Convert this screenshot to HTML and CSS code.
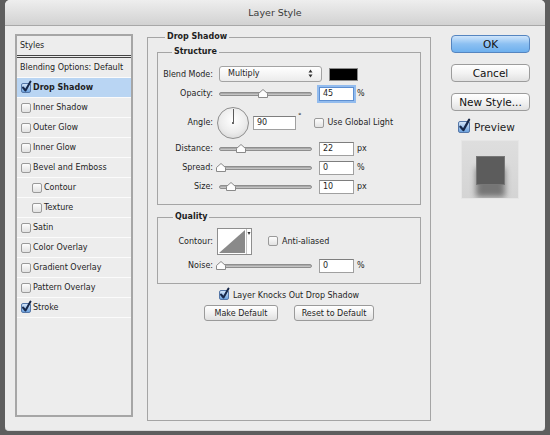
FILE: index.html
```html
<!DOCTYPE html>
<html lang="en">
<head>
    <meta charset="UTF-8">
    <title>Layer Style</title>
    <link rel="stylesheet" href="styles.css">
</head>
<body>
<div class="window">
    <div class="titlebar">Layer Style</div>

    <div class="content">
        <!-- styles list -->
        <div class="styles-panel">
            <div class="styles-head">Styles</div>
            <div class="style-row plain">Blending Options: Default</div>
            <div class="style-row selected"><span class="cb checked"><svg viewBox="0 0 11 13"><path d="M2 7.5 L4.5 10.5 L9.5 1.5"/></svg></span><b>Drop Shadow</b></div>
            <div class="style-row"><span class="cb"></span>Inner Shadow</div>
            <div class="style-row"><span class="cb"></span>Outer Glow</div>
            <div class="style-row"><span class="cb"></span>Inner Glow</div>
            <div class="style-row"><span class="cb"></span>Bevel and Emboss</div>
            <div class="style-row indent"><span class="cb"></span>Contour</div>
            <div class="style-row indent"><span class="cb"></span>Texture</div>
            <div class="style-row"><span class="cb"></span>Satin</div>
            <div class="style-row"><span class="cb"></span>Color Overlay</div>
            <div class="style-row"><span class="cb"></span>Gradient Overlay</div>
            <div class="style-row"><span class="cb"></span>Pattern Overlay</div>
            <div class="style-row"><span class="cb checked"><svg viewBox="0 0 11 13"><path d="M2 7.5 L4.5 10.5 L9.5 1.5"/></svg></span>Stroke</div>
        </div>

        <!-- drop shadow settings -->
        <fieldset class="group outer">
            <legend>Drop Shadow</legend>
            <div class="outer-body">
                <fieldset class="group">
                    <legend>Structure</legend>
                    <div class="rows structure">
                        <div class="row row-blend">
                            <span class="lbl">Blend Mode:</span>
                            <div class="select">Multiply
                                <svg class="arrows" viewBox="0 0 5 9"><path d="M0.5 3.5 L2.5 0.5 L4.5 3.5 Z M0.5 5.5 L2.5 8.5 L4.5 5.5 Z"/></svg>
                            </div>
                            <span class="swatch"></span>
                        </div>
                        <div class="row">
                            <span class="lbl">Opacity:</span>
                            <div class="slider"><svg class="thumb" style="left: 38px" viewBox="0 0 10 9"><path d="M0.5 8.5 V4.5 L5 0.5 L9.5 4.5 V8.5 Z"/></svg></div>
                            <span class="field focus">45</span><span class="unit">%</span>
                        </div>
                        <div class="row row-angle">
                            <span class="lbl">Angle:</span>
                            <div class="dial"></div>
                            <span class="field wide">90</span><span class="deg">°</span>
                            <span class="cb gap-cb"></span><span class="cb-text">Use Global Light</span>
                        </div>
                        <div class="row">
                            <span class="lbl">Distance:</span>
                            <div class="slider"><svg class="thumb" style="left: 16px" viewBox="0 0 10 9"><path d="M0.5 8.5 V4.5 L5 0.5 L9.5 4.5 V8.5 Z"/></svg></div>
                            <span class="field">22</span><span class="unit">px</span>
                        </div>
                        <div class="row">
                            <span class="lbl">Spread:</span>
                            <div class="slider"><svg class="thumb" style="left: -4px" viewBox="0 0 10 9"><path d="M0.5 8.5 V4.5 L5 0.5 L9.5 4.5 V8.5 Z"/></svg></div>
                            <span class="field">0</span><span class="unit">%</span>
                        </div>
                        <div class="row">
                            <span class="lbl">Size:</span>
                            <div class="slider"><svg class="thumb" style="left: 6px" viewBox="0 0 10 9"><path d="M0.5 8.5 V4.5 L5 0.5 L9.5 4.5 V8.5 Z"/></svg></div>
                            <span class="field">10</span><span class="unit">px</span>
                        </div>
                    </div>
                </fieldset>

                <fieldset class="group quality">
                    <legend>Quality</legend>
                    <div class="rows">
                        <div class="row row-contour">
                            <span class="lbl">Contour:</span>
                            <svg class="contour" viewBox="0 0 35 27">
                                <rect x="0.5" y="0.5" width="34" height="26" fill="#fff" stroke="#8e8e8e"/>
                                <path d="M2 25 L28 2 V25 Z" fill="#8a8a8a"/>
                                <path d="M29.5 1 V26" stroke="#c4c4c4"/>
                                <path d="M30.5 4 H33.5 L32 7 Z" fill="#333"/>
                            </svg>
                            <span class="cb gap-cb2"></span><span class="cb-text">Anti-aliased</span>
                        </div>
                        <div class="row">
                            <span class="lbl">Noise:</span>
                            <div class="slider"><svg class="thumb" style="left: -4px" viewBox="0 0 10 9"><path d="M0.5 8.5 V4.5 L5 0.5 L9.5 4.5 V8.5 Z"/></svg></div>
                            <span class="field">0</span><span class="unit">%</span>
                        </div>
                    </div>
                </fieldset>

                <div class="knockout">
                    <span class="cb checked"><svg viewBox="0 0 11 13"><path d="M2 7.5 L4.5 10.5 L9.5 1.5"/></svg></span>
                    <span class="cb-text">Layer Knocks Out Drop Shadow</span>
                </div>
                <div class="defaults">
                    <button class="btn make">Make Default</button>
                    <button class="btn reset">Reset to Default</button>
                </div>
            </div>
        </fieldset>

        <!-- dialog buttons -->
        <div class="actions">
            <button class="big-btn primary">OK</button>
            <button class="big-btn">Cancel</button>
            <button class="big-btn">New Style...</button>
            <div class="preview-row">
                <span class="cb big checked"><svg viewBox="0 0 11 13"><path d="M2 7.5 L4.5 10.5 L9.5 1.5"/></svg></span>
                <span>Preview</span>
            </div>
            <div class="preview-box"><div class="preview-square"></div></div>
        </div>
    </div>
</div>
</body>
</html>
```

FILE: styles.css
```css
body {
    margin: 0;
    height: 435px;
    background: #5e5e5e;
    font-family: "DejaVu Sans", sans-serif;
    font-size: 8px;
    color: #1e1e1e;
    overflow: hidden;
}
.window {
    width: 540px;
    height: 431px;
    margin-left: 5px;
    background: #ececec;
    border-radius: 5px 5px 4px 4px;
    overflow: hidden;
    box-sizing: border-box;
    border-bottom: 1px solid #d8d8d8;
}
.titlebar {
    height: 25px;
    line-height: 25px;
    border-bottom: 1px solid #a8a8a8;
    background: linear-gradient(#eeeeee, #d2d2d2);
    text-align: center;
    font-size: 9.5px;
    color: #3a3a3a;
}
.content {
    display: flex;
    align-items: flex-start;
    padding: 8px 10px 0 10px;
}

/* left list */
.styles-panel {
    width: 118px;
    height: 383px;
    box-sizing: border-box;
    border: 2px solid #a6a6a6;
    background: #ededed;
}
.styles-head {
    height: 19px;
    line-height: 19px;
    padding-left: 3px;
    border-bottom: 3px double #444;
}
.style-row {
    height: 20px;
    box-sizing: border-box;
    border-bottom: 1px solid #fbfbfb;
    display: flex;
    align-items: center;
    gap: 2px;
    padding-left: 4px;
}
.style-row.plain { padding-left: 3px; }
.style-row.indent { padding-left: 15px; }
.style-row.selected { background: #b9d5f3; }

/* checkboxes */
.cb {
    position: relative;
    flex: none;
    width: 10px;
    height: 10px;
    box-sizing: border-box;
    border: 1px solid #9a9a9a;
    border-radius: 2px;
    background: linear-gradient(#fdfdfd, #e2e2e2);
}
.cb.checked {
    border-color: #5577a8;
    background: linear-gradient(#d3e5f9, #6da2de);
}
.cb svg {
    position: absolute;
    left: -1px;
    top: -4px;
    width: 11px;
    height: 13px;
    overflow: visible;
}
.cb svg path {
    fill: none;
    stroke: #17284a;
    stroke-width: 2;
    stroke-linecap: round;
    stroke-linejoin: round;
}
.cb.big {
    width: 12px;
    height: 12px;
}
.cb.big svg {
    width: 13px;
    height: 15px;
}
.cb-text { margin-left: 4px; }

/* group boxes */
.group {
    margin: 0;
    padding: 0;
    border: 1px solid #a5a5a5;
    min-width: 0;
}
.group legend {
    font-weight: bold;
    line-height: 10px;
    padding: 0 2px;
    margin-left: 14px;
}
.outer {
    flex: none;
    width: 284px;
    height: 389px;
    box-sizing: border-box;
    margin: -2px 0 0 14px;
}
.outer > legend { margin-left: 17px; }
.outer-body { padding: 5px 9px 0 9px; }
.rows { padding: 7px 0 8px 0; }
.quality { margin-top: 7px; }
.quality legend { margin-left: 15px; }
.quality .rows { padding-top: 4px; }

.row {
    display: flex;
    align-items: center;
    height: 19px;
}
.row-blend { height: 20px; }
.row-angle {
    height: 36px;
    box-sizing: border-box;
    padding-top: 3px;
}
.row-contour { height: 30px; }
.lbl {
    width: 55px;
    margin-right: 6px;
    text-align: right;
    flex: none;
}

.select {
    position: relative;
    width: 103px;
    height: 16px;
    box-sizing: border-box;
    border: 1px solid #a3a3a3;
    border-radius: 3px;
    background: linear-gradient(#ffffff, #ebebeb);
    padding-left: 8px;
    line-height: 14px;
}
.arrows {
    position: absolute;
    right: 8px;
    top: 2px;
    width: 5px;
    height: 9px;
    fill: #333;
}
.swatch {
    width: 29px;
    height: 13px;
    margin-left: 7px;
    box-sizing: border-box;
    border: 1px solid #8a8a8a;
    background: #000;
}

.slider {
    position: relative;
    width: 93px;
    height: 4px;
    box-sizing: border-box;
    border: 1px solid #8e8e8e;
    border-radius: 2px;
    background: linear-gradient(#9d9d9d, #d0d0d0);
}
.thumb {
    position: absolute;
    top: -4px;
    width: 10px;
    height: 9px;
    fill: #fdfdfd;
    stroke: #8a8a8a;
}

.field {
    width: 35px;
    height: 14px;
    box-sizing: border-box;
    margin-left: 7px;
    border: 1px solid #a0a0a0;
    border-top-color: #7e7e7e;
    background: #fff;
    padding-left: 3px;
    line-height: 12px;
}
.field.focus {
    border-color: #5d8fd2;
    box-shadow: 0 0 0 2px #93bcee;
}
.field.wide {
    width: 43px;
    margin-left: 4px;
}
.unit { margin-left: 3px; }
.deg {
    align-self: flex-start;
    margin: 6px 0 0 2px;
    font-size: 7px;
}

.dial {
    position: relative;
    flex: none;
    width: 32px;
    height: 32px;
    margin-left: -2px;
    box-sizing: border-box;
    border: 1px solid #8f8f8f;
    border-radius: 50%;
    background: radial-gradient(circle at 50% 40%, #ffffff, #ececec 55%, #cdcdcd);
}
.dial::before {
    content: "";
    position: absolute;
    left: 15px;
    top: 1px;
    width: 1px;
    height: 14px;
    background: #5a5a5a;
}
.dial::after {
    content: "";
    position: absolute;
    left: 14px;
    top: 14px;
    width: 2px;
    height: 2px;
    background: #666;
}
.gap-cb { margin-left: 12px; }
.gap-cb2 { margin-left: 16px; }

.contour {
    flex: none;
    width: 35px;
    height: 27px;
    margin-left: -2px;
}

.knockout {
    display: flex;
    align-items: center;
    justify-content: center;
    height: 14px;
    margin-top: 4px;
}
.defaults {
    display: flex;
    justify-content: center;
    gap: 16px;
    margin-top: 3px;
}
.btn {
    height: 16px;
    padding: 0;
    border: 1px solid #9a9a9a;
    border-radius: 3px;
    background: linear-gradient(#ffffff, #f1f1f1 50%, #e0e0e0);
    font-family: "DejaVu Sans", sans-serif;
    font-size: 8px;
    color: #1e1e1e;
}
.btn.make { width: 74px; }
.btn.reset { width: 80px; }

/* right column */
.actions {
    display: flex;
    flex-direction: column;
    width: 79px;
    margin: 1px 0 0 20px;
}
.big-btn {
    height: 18px;
    margin-bottom: 11px;
    padding: 0;
    border: 1px solid #9c9c9c;
    border-radius: 4px;
    background: linear-gradient(#ffffff, #f3f3f3 50%, #e1e1e1);
    font-family: "DejaVu Sans", sans-serif;
    font-size: 10.5px;
    color: #111;
}
.big-btn.primary {
    border-color: #5585c0;
    background: linear-gradient(#cfe5fb, #8cc0f2 50%, #6eb0ee);
}
.preview-row {
    display: flex;
    align-items: center;
    gap: 4px;
    margin: -2px 0 0 7px;
    height: 14px;
    font-size: 10.5px;
}
.preview-box {
    width: 58px;
    height: 59px;
    margin: 6px 0 0 10px;
    box-sizing: border-box;
    border: 1px solid #e6e6e6;
    background: linear-gradient(#dedede, #d4d4d4);
    overflow: hidden;
    display: flex;
    justify-content: center;
    padding-top: 15px;
}
.preview-square {
    width: 29px;
    height: 29px;
    box-sizing: border-box;
    border: 1px solid #777;
    background: #5c5c5c;
    box-shadow: 0 12px 6px rgba(0, 0, 0, 0.45);
}
```
